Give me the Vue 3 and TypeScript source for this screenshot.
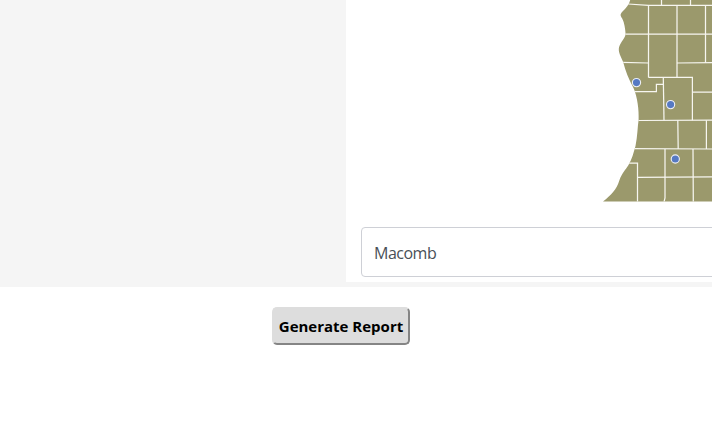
<script setup lang="ts">
import { ref } from 'vue'

interface Site {
  x: number
  y: number
}

const sites: Site[] = [
  { x: 636.5, y: 82.6 },
  { x: 670.6, y: 104.6 },
  { x: 675.3, y: 159 },
]

const county = ref('Macomb')

const borders: string[] = [
  'M628 4L648.5 5.4H712',
  'M661.5 0V5.4M690.5 0V5.4',
  'M648.5 5.4V77.4M677 5.4V77.4M705.5 5.4V62.7',
  'M624 34H712',
  'M622 62.4L648.5 63M677 63L712 62.6',
  'M648.5 77.4H692.4V120.3',
  'M663.3 77.4L664 120.3',
  'M633 91.6H656.4V84.4H663.4',
  'M692.4 92H712',
  'M637 120.5L712 120.2',
  'M677.8 120.3L678.2 149M706.4 120.3V149',
  'M632 148.6L712 149',
  'M665 149V198L664 202M693 149L693.3 202',
  'M628 163H637.5V202',
  'M637.5 177.3L712 176.8',
]
</script>

<template>
  <div class="page">
    <div class="panels">
      <aside class="sidebar"></aside>
      <main class="card">
        <svg class="map" width="366" height="212" viewBox="346 0 366 212">
          <defs>
            <clipPath id="land">
              <path d="M630.2 0C629 5 626 8 622.5 11.5C619.8 14.5 620.3 15.5 622.2 18.5C624.5 23 625.2 29 625.6 34C625.2 38 621 41.5 619.1 47C617.8 52 621 56.5 623.3 62.5C625.5 71 628.5 78.5 633.5 88C637.5 97 639 110 638.6 120C637.5 127 637.5 136 635.5 146C633.5 153 632 159 628.5 165C625.5 170 622 173 619.5 180C616.5 190 611 195 603 201.6H712V0Z" />
            </clipPath>
          </defs>
          <g clip-path="url(#land)">
            <rect class="land" x="590" y="0" width="122" height="204" />
            <path v-for="d in borders" :key="d" class="border" :d="d" />
          </g>
          <circle v-for="s in sites" :key="s.x" class="site" :cx="s.x" :cy="s.y" r="4.1" />
        </svg>
        <div class="select">{{ county }}</div>
      </main>
    </div>
    <div class="actions">
      <button class="generate" type="button">Generate Report</button>
    </div>
  </div>
</template>

<style>
body {
  margin: 0;
  background: #fff;
}
</style>

<style scoped>
.page {
  width: 100%;
  height: 427px;
  overflow: hidden;
  font-family: "Segoe UI", "Open Sans", "Noto Sans", sans-serif;
}
.panels {
  display: flex;
  box-sizing: border-box;
  height: 287px;
  padding-bottom: 5px;
  background: #f5f5f5;
}
.sidebar {
  flex: 0 0 346px;
}
.card {
  flex: 1;
  min-width: 0;
  overflow: hidden;
  background: #fff;
}
.map {
  display: block;
}
.land {
  fill: #9b996c;
}
.border {
  fill: none;
  stroke: #f7f6f0;
  stroke-width: 1.25;
}
.site {
  fill: #5679c3;
  stroke: #eef0f5;
  stroke-width: 1.1;
}
.select {
  box-sizing: border-box;
  width: 400px;
  height: 50px;
  margin: 15px 0 0 15px;
  padding-left: 12px;
  border: 1px solid #ced0d6;
  border-radius: 4px;
  color: #495057;
  font-size: 16px;
  letter-spacing: -0.5px;
  line-height: 50px;
}
.actions {
  display: flex;
  padding: 20px 0 0 272px;
}
.generate {
  box-sizing: border-box;
  width: 138px;
  height: 38px;
  padding: 0;
  border: 2px solid;
  border-color: #ddd #858585 #858585 #ddd;
  border-radius: 5px;
  background: #ddd;
  color: #000;
  font-family: inherit;
  font-size: 15px;
  font-weight: 700;
  white-space: nowrap;
}
</style>
